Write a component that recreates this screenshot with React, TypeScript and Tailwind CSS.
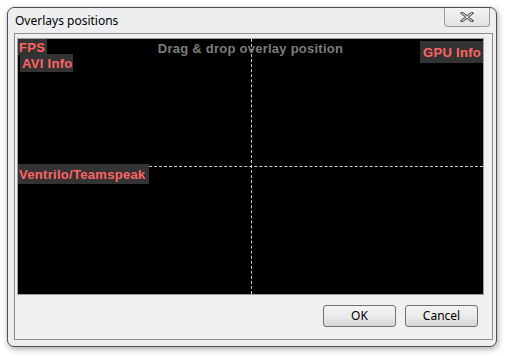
import React from "react";

const lbl = "absolute bg-[#333333] text-[#ff6464] font-bold leading-none flex items-center tracking-[0.3px]";
const lblFont = { fontFamily: '"Liberation Sans", Arial, sans-serif' };

export default function App() {
  return (
    <div className="w-[506px] h-[356px] bg-white pt-[7px] pl-[7px]">
      <div className="relative w-[490px] h-[340px] rounded-[7px] border border-[#4e4e4e] bg-[#eceef0] shadow-[1px_2px_6px_rgba(0,0,0,0.35)] flex flex-col">
        <div className="h-[25px] flex items-start">
          <div className="pl-[7px] pt-[6px] text-[12px] text-black leading-[14px]" style={{ fontFamily: '"Noto Sans", "Liberation Sans", sans-serif' }}>
            Overlays positions
          </div>
          <div className="ml-auto mr-[6px] w-[46px] h-[19px] rounded-b-[4px] border border-t-0 border-[#9a9a9a] bg-gradient-to-b from-[#f4f4f4] to-[#e2e2e2] flex items-center justify-center">
            <svg width="14" height="10" viewBox="0 0 14 10">
              <path d="M2 1 L12 9 M12 1 L2 9" stroke="#5e5e66" strokeWidth="3" strokeLinecap="square" />
              <path d="M2 1 L12 9 M12 1 L2 9" stroke="#f4f4f4" strokeWidth="1" />
            </svg>
          </div>
        </div>
        <div className="ml-[6px] mr-[3px] h-[307px] border border-[#8c8c8c] bg-[#f0f0f0] flex flex-col">
          <div className="ml-[2px] mt-[4px] w-[467px] h-[257px] border border-[#a0a0a0] bg-black relative overflow-hidden" style={lblFont}>
            <div className="absolute left-[233px] top-0 h-full border-l border-dashed border-[#d0d0d0]" />
            <div className="absolute top-[127px] left-[131px] right-0 border-t border-dashed border-[#d0d0d0]" />
            <div className="absolute top-[3px] left-0 right-0 text-center text-[13px] font-bold text-[#7c7c7c] leading-none tracking-[0.25px]">
              Drag &amp; drop overlay position
            </div>
            <div className={lbl + " left-0 top-0 w-[29px] h-[16px] pl-[1px] text-[13px]"}>FPS</div>
            <div className={lbl + " left-[2px] top-[15px] w-[53px] h-[18px] pl-[2px] text-[13px]"}>AVI Info</div>
            <div className={lbl + " right-0 top-[2px] w-[63px] h-[22px] pl-[3px] text-[13px]"}>GPU Info</div>
            <div className={lbl + " left-0 top-[125px] w-[131px] h-[20px] pl-[1px] text-[13px]"}>Ventrilo/Teamspeak</div>
          </div>
          <div className="flex justify-end gap-[9px] mt-[10px] mr-[14px]">
            {["OK", "Cancel"].map((t) => (
              <button
                key={t}
                className="w-[73px] h-[22px] rounded-[3px] border border-[#707070] bg-gradient-to-b from-[#f2f2f2] via-[#ebebeb] to-[#d6d6d6] text-[12px] text-black flex items-center justify-center"
                style={{ fontFamily: '"Noto Sans", "Liberation Sans", sans-serif' }}
              >
                {t}
              </button>
            ))}
          </div>
        </div>
      </div>
    </div>
  );
}
